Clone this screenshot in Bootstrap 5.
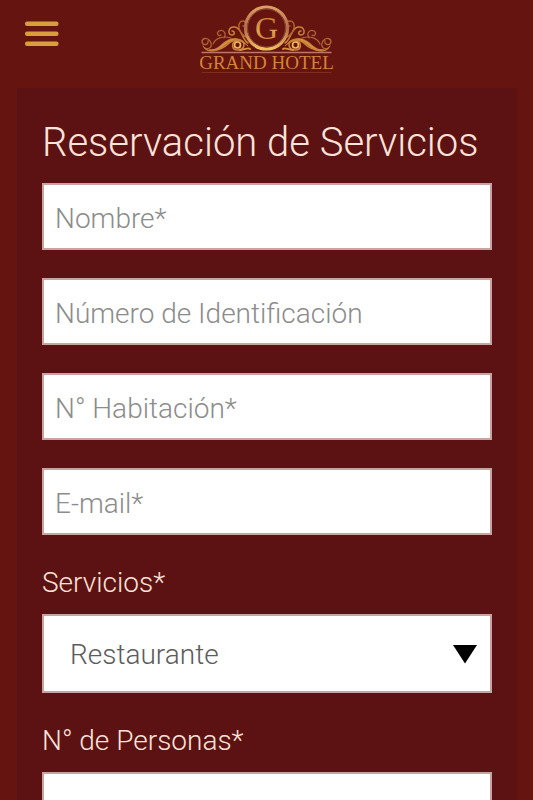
<!DOCTYPE html>
<html lang="es">
<head>
<meta charset="utf-8">
<meta name="viewport" content="width=device-width, initial-scale=1">
<title>Grand Hotel - Reservación de Servicios</title>
<link href="https://cdn.jsdelivr.net/npm/bootstrap@5.3.0/dist/css/bootstrap.min.css" rel="stylesheet">
<style>
  body { background: #651410; color: #fde3da; font-family: Roboto, "Liberation Sans", sans-serif; font-weight: 300; }
  .site-header { height: 88px; padding: 5px 25px 0; display: grid; grid-template-columns: 1fr auto 1fr; align-items: start; }
  .menu-btn { justify-self: start; margin-top: 16px; line-height: 0; }
  .brand-link { line-height: 0; }
  .panel { background: #5c1212; margin: 0 16px 0 17px; padding: 33px 25px 28px; }
  .panel-title { font-size: 40px; line-height: 44px; font-weight: 300; margin-bottom: 18px; white-space: nowrap; }
  .field-stack { display: grid; gap: 28px; }
  .field, .field:focus { height: 67px; border: 2px solid #c9a3a0; border-radius: 0; background-color: #fff; padding: 4px 11px 0; font-size: 28px; font-weight: 300; color: #5c5c5c; }
  .field::placeholder { color: #8c8c8c; }
  .field-label { display: block; font-size: 28px; line-height: 36px; margin: 30px 0 13px; }
  .pick, .pick:focus { height: 79px; padding: 2px 50px 0 26px; appearance: none; }
  .pick-arrow { position: absolute; right: 15px; top: 31px; pointer-events: none; }
</style>
</head>
<body>
<header class="site-header">
  <button type="button" class="menu-btn btn p-0 border-0" aria-label="Menú">
    <svg width="34" height="26" viewBox="0 0 34 26" fill="#d99f3c"><rect y="0.5" width="33.500" height="4.500" rx="2"/><rect y="10.500" width="33.500" height="4.500" rx="2"/><rect y="20.500" width="33.500" height="4.500" rx="2"/></svg>
  </button>
  <a href="#" class="brand-link" aria-label="Grand Hotel">
    <svg width="134" height="70" viewBox="200 5 134 70" fill="none" stroke-linecap="round">
      <defs>
        <linearGradient id="gold" x1="0" y1="0" x2="0" y2="1"><stop offset="0" stop-color="#c06c2c"/><stop offset=".6" stop-color="#e3a24c"/><stop offset="1" stop-color="#bd6a2c"/></linearGradient>
        <linearGradient id="ring" x1="0" y1="0" x2="0" y2="1"><stop offset="0" stop-color="#dda063"/><stop offset=".5" stop-color="#b46a45"/><stop offset="1" stop-color="#f0be62"/></linearGradient>
        <g id="scroll" stroke="#b0642f">
          <path d="M208 41C209 45 203 46 202 42C202 38 207 37 210 41C213 46 210 50 205 48" stroke-width="1.300"/>
          <path d="M203 46C206 52 214 51 220 46C228 38 238 34 248 46C240 39 232 39 224 46C216 53 206 53 203 46Z" fill="#d48d3f" stroke="#d48d3f" stroke-width=".6"/>
          <path d="M210 50C220 51 225 47 228 44C231 41 235 39 240 40C246 42 245 50 238 50C231 50 231 42 237 41" stroke-width="1.600" stroke="#c9803a"/>
          <circle cx="237.500" cy="45" r="3" stroke="#f0b85e" stroke-width="1.700"/>
          <path d="M240 50C245 50 248 47 250 49" stroke-width="1.800" stroke="#d9913f"/>
          <path d="M213 44C216 37 224 36 231 38" stroke-width="1.100"/>
          <path d="M224 38C227 33 223 29 219 31C216 33 218 37 221 35" stroke-width="1.300"/>
          <path d="M248 43C242 40 242 28 235 27C228 26 227 35 232 35C235 35 235 31 232 31" stroke-width="1.500" stroke="#c9803a"/>
          <path d="M246 37C237 32 237 21 243 21C248 21 247 27 243 26" stroke-width="1.400"/>
        </g>
      </defs>
      <use href="#scroll"/>
      <use href="#scroll" transform="translate(533 0) scale(-1 1)"/>
      <circle cx="266.500" cy="28" r="21" fill="#651410" stroke="url(#ring)" stroke-width="3.200"/>
      <circle cx="266.500" cy="28" r="19" stroke="#8d4735" stroke-width="1"/>
      <path d="M202 52.500H331" stroke="#b97868" stroke-width="1.300"/>
      <path d="M202 72.500H331" stroke="#7d2c20" stroke-width="1"/>
      <g font-family="Liberation Serif, serif" text-anchor="middle">
        <text x="266.500" y="39" font-size="32" fill="url(#gold)">G</text>
        <text x="266.500" y="69" font-size="19" fill="#d2843a">GRAND HOTEL</text>
      </g>
    </svg>
  </a>
</header>
<main class="panel">
  <h1 class="panel-title">Reservación de Servicios</h1>
  <form>
    <div class="field-stack">
      <input type="text" class="form-control field" placeholder="Nombre*" aria-label="Nombre">
      <input type="text" class="form-control field" placeholder="Número de Identificación" aria-label="Número de Identificación">
      <input type="text" class="form-control field" placeholder="N° Habitación*" aria-label="N° Habitación">
      <input type="email" class="form-control field" placeholder="E-mail*" aria-label="E-mail">
    </div>
    <label class="field-label" for="servicio">Servicios*</label>
    <div class="position-relative">
      <select id="servicio" class="form-control field pick"><option>Restaurante</option></select>
      <svg class="pick-arrow" width="24" height="19" viewBox="0 0 24 19"><path d="M0 0H24L12 18.500Z" fill="#000"/></svg>
    </div>
    <label class="field-label" for="personas">N° de Personas*</label>
    <input type="text" id="personas" class="form-control field">
  </form>
</main>
<script src="https://cdn.jsdelivr.net/npm/bootstrap@5.3.0/dist/js/bootstrap.bundle.min.js"></script>
</body>
</html>
